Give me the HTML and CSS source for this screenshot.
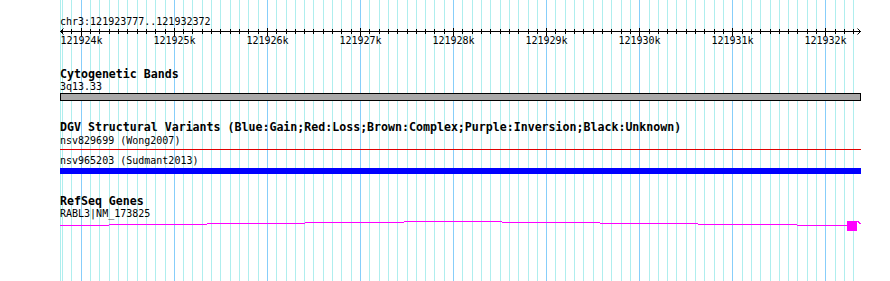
FILE: index.html
```html
<!DOCTYPE html>
<html lang="en">
<head>
  <meta charset="UTF-8">
  <title>chr3:121923777..121932372</title>
  <link rel="stylesheet" href="styles.css">
</head>
<body>

  <div class="panel">
    <!-- grid lines behind the tracks -->
    <svg class="grid" id="grid" width="890" height="281"></svg>

    <div class="tracks">
      <!-- Ruler -->
      <div class="ruler">
        <div class="ruler-title">chr3:121923777..121932372</div>
        <svg class="ruler-axis" id="ruler" width="802" height="18"></svg>
      </div>

      <!-- Cytogenetic Bands -->
      <div class="track track-cyto">
        <div class="track-title">Cytogenetic Bands</div>
        <div class="feature-label">3q13.33</div>
        <div class="band"></div>
      </div>

      <!-- DGV -->
      <div class="track track-dgv">
        <div class="track-title">DGV Structural Variants (Blue:Gain;Red:Loss;Brown:Complex;Purple:Inversion;Black:Unknown)</div>
        <div class="feature-label label-first">nsv829699 (Wong2007)</div>
        <div class="variant variant-loss"></div>
        <div class="feature-label label-second">nsv965203 (Sudmant2013)</div>
        <div class="variant variant-gain"></div>
      </div>

      <!-- RefSeq Genes -->
      <div class="track track-refseq">
        <div class="track-title">RefSeq Genes</div>
        <div class="feature-label">RABL3|NM_173825</div>
        <svg class="gene" id="gene" width="802" height="12"></svg>
      </div>
    </div>
  </div>

  <script>
    const SVG = "http://www.w3.org/2000/svg";
    const start = 121923777;
    const end = 121932372;
    const left = 60;
    const span = 800;

    function xOf(bp) {
      return Math.round(left + (bp - start) * span / (end - start));
    }

    function el(name, attrs) {
      const node = document.createElementNS(SVG, name);
      for (const k in attrs) node.setAttribute(k, attrs[k]);
      return node;
    }

    // grid
    const grid = document.getElementById("grid");
    grid.appendChild(el("rect", { x: 60, y: 0, width: 1, height: 281, class: "minor" }));
    for (let bp = 121923800; bp <= end; bp += 100) {
      const major = bp % 1000 === 0;
      grid.appendChild(el("rect", { x: xOf(bp), y: 0, width: 1, height: 281, class: major ? "major" : "minor" }));
    }

    // ruler
    const ruler = document.getElementById("ruler");
    ruler.appendChild(el("line", { x1: 0, y1: 3.5, x2: 801, y2: 3.5, class: "axis" }));
    ruler.appendChild(el("polyline", { points: "3.5,0.5 0.5,3.5 3.5,6.5", class: "arrow" }));
    ruler.appendChild(el("polyline", { points: "797.5,0.5 800.5,3.5 797.5,6.5", class: "arrow" }));
    for (let bp = 121923800; bp <= end; bp += 100) {
      const x = xOf(bp) - left + 0.5;
      const major = bp % 1000 === 0;
      ruler.appendChild(el("line", { x1: x, y1: major ? 0 : 1, x2: x, y2: major ? 8 : 6, class: "axis" }));
      if (major) {
        const t = el("text", { x: x, y: 16, "text-anchor": "middle" });
        t.textContent = (bp / 1000) + "k";
        ruler.appendChild(t);
      }
    }

    // gene: intron hat + exon box
    const gene = document.getElementById("gene");
    const steps = [[0, 49, 5], [49, 147, 4], [147, 245, 3], [245, 344, 2], [344, 442, 1],
                   [442, 540, 2], [540, 638, 3], [638, 737, 4], [737, 787, 5]];
    steps.forEach(([a, b, y]) => {
      gene.appendChild(el("rect", { x: a, y: y, width: b - a, height: 1, class: "intron" }));
    });
    gene.appendChild(el("rect", { x: 787, y: 1, width: 10, height: 10, class: "exon" }));
    gene.appendChild(el("polyline", { points: "797.5,1.5 799.5,2.5 800.5,4.5", class: "strand" }));
  </script>

</body>
</html>
```

FILE: styles.css
```css
/* General Reset */
* {
  margin: 0;
  padding: 0;
  box-sizing: border-box;
}
body {
  background: #fff;
  color: #000;
  font-family: "DejaVu Sans Mono", "Liberation Mono", monospace;
}
.panel {
  position: relative;
  width: 890px;
  height: 281px;
  overflow: hidden;
  background: #fff;
}

/* grid */
.grid {
  position: absolute;
  top: 0;
  left: 0;
  shape-rendering: crispEdges;
}
.grid .minor {
  fill: #afeeee;
}
.grid .major {
  fill: #87cefa;
}

.tracks {
  position: relative;
  padding: 16px 0 0 60px;
  width: 862px;
}

/* ruler */
.ruler-title {
  font-size: 10px;
  line-height: 12px;
  height: 12px;
  white-space: nowrap;
}
.ruler-axis {
  display: block;
  overflow: visible;
}
.ruler-axis .axis {
  stroke: #000;
  stroke-width: 1;
  shape-rendering: crispEdges;
}
.ruler-axis .arrow {
  fill: none;
  stroke: #000;
  stroke-width: 1;
}
.ruler-axis text {
  font-family: "DejaVu Sans Mono", "Liberation Mono", monospace;
  font-size: 10px;
  fill: #000;
}

/* tracks */
.track-title {
  font-size: 11.6px;
  font-weight: bold;
  line-height: 13px;
  height: 13px;
  white-space: nowrap;
}
.feature-label {
  font-size: 10px;
  line-height: 12px;
  height: 12px;
  white-space: nowrap;
}
.track-cyto {
  margin-top: 22px;
}
.band {
  width: 801px;
  height: 8px;
  border: 1px solid #000;
  background: #a9a9a9;
}
.track-dgv {
  margin-top: 20px;
}
.label-first {
  margin-top: 1px;
}
.label-second {
  margin-top: 5px;
}
.variant {
  width: 801px;
}
.variant-loss {
  margin-top: 2px;
  height: 1px;
  background: #e00000;
}
.variant-gain {
  margin-top: 1px;
  height: 6px;
  background: #0000ff;
}
.track-refseq {
  margin-top: 21px;
}
.gene {
  display: block;
  shape-rendering: crispEdges;
}
.gene .intron,
.gene .exon {
  fill: #ff00ff;
}
.gene .strand {
  fill: none;
  stroke: #ff00ff;
  stroke-width: 1;
}
```
